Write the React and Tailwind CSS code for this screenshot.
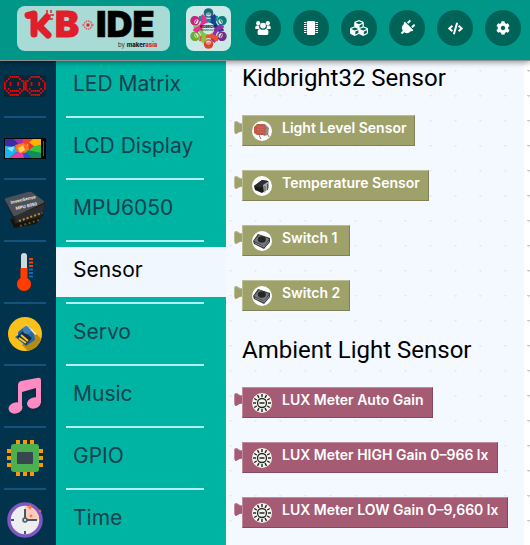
import { FaCubes, FaPlug, FaCode, FaCog } from 'react-icons/fa';

function range(n) {
  return Array.from({ length: n }, (_, i) => i);
}

function ChipIcon() {
  return (
    <svg width="14" height="14" viewBox="0 0 14 14" fill="currentColor" aria-hidden="true">
      <rect x="3" y="0" width="8" height="14" rx="1" />
      {range(6).map((i) => (
        <path key={i} d={`M0 ${1 + i * 2}h2.500v1h-2.500zM11.500 ${1 + i * 2}h2.500v1h-2.500z`} />
      ))}
    </svg>
  );
}

function UsersIcon() {
  return (
    <svg width="16" height="16" viewBox="0 0 16 16" fill="currentColor" aria-hidden="true">
      <circle cx="3.2" cy="3.2" r="2.1" />
      <circle cx="12.8" cy="3.2" r="2.1" />
      <path d="M0.3 9V7.3Q0.3 5.6 2 5.6h2.2Q3.8 8 5 9zM15.7 9V7.3Q15.7 5.6 14 5.6h-2.2Q12.2 8 11 9z" />
      <circle cx="8" cy="5.6" r="2.9" />
      <path d="M2.6 13.6v-2q0-2.5 2.6-2.7q2.8 1.8 5.6 0q2.6.2 2.6 2.7v2q0 1.4-1.4 1.4H4q-1.4 0-1.4-1.4z" />
    </svg>
  );
}

const tools = [
  { label: 'Community', icon: <UsersIcon /> },
  { label: 'Board', icon: <ChipIcon /> },
  { label: 'Packages', icon: <FaCubes size={18} /> },
  { label: 'Port', icon: <FaPlug size={16} className="rotate-45" /> },
  { label: 'Source code', icon: <FaCode size={15} /> },
  { label: 'Settings', icon: <FaCog size={14} /> },
];

const face = [
  '...#####...',
  '..#.....#..',
  '.#.......#.',
  '#..#...#..#',
  '#..#...#..#',
  '#.........#',
  '#.#.....#.#',
  '.#.#####.#.',
  '..#.....#..',
  '...#####...',
];

function MatrixIcon() {
  return (
    <svg width="42" height="22" viewBox="0 0 42 22" aria-hidden="true">
      <rect width="42" height="22" rx="2" fill="#072638" />
      {[0, 21].map((dx) =>
        face.map((row, y) =>
          row.split('').map((c, x) =>
            c === '#' ? <rect key={`${dx}-${x}-${y}`} x={dx + x * 1.9} y={1 + y * 2} width="1.7" height="1.8" fill="#f00808" /> : null
          )
        )
      )}
      <path d="M19 6h4M19 9h4M19 12h4M19 15h4" stroke="#d90909" strokeWidth="1.4" strokeDasharray="1.5 .6" />
    </svg>
  );
}

function DisplayIcon() {
  return (
    <svg width="42" height="21" viewBox="0 0 42 21" aria-hidden="true">
      <rect width="42" height="21" fill="#050505" />
      <rect x="1" y="1" width="36" height="19" fill="#1b79d0" />
      <path d="M1 1h9l8 9L1 8z" fill="#3b2aa0" />
      <path d="M1 8l16 2L5 20H1z" fill="#18b8ec" />
      <path d="M10 1h9l-1 9z" fill="#a92cb8" />
      <path d="M19 1h10L18 11z" fill="#f6402e" />
      <path d="M29 1h8v6l-19 4z" fill="#ffb000" />
      <path d="M37 7v8l-19-4z" fill="#35c43c" />
      <path d="M37 15v5h-9L18 11z" fill="#0e8f56" />
      <path d="M5 20l13-9 3 9z" fill="#e63aa5" />
      <path d="M18 11l10 9h-8z" fill="#2650d8" />
      <path d="M11 7l8-2 8 5-6 5-8-1z" fill="#ff7424" />
      <path d="M14 10l5-3 2 5-5 3z" fill="#ffd34d" />
      <path d="M24 4l6 4-5 4z" fill="#e83030" />
      <path d="M3 10l8-2-3 6z" fill="#8be5fa" />
      <path d="M39.500 3v15" stroke="#777" strokeWidth=".7" />
    </svg>
  );
}

function ImuIcon() {
  return (
    <svg width="42" height="38" viewBox="0 0 42 38" aria-hidden="true">
      <path d="M6 28l4 9 22-4 8-10z" fill="#15130c" />
      <path d="M1 9l7 16 3 8 27-7 3-10V10z" fill="#1e2022" />
      <path d="M1 9Q0 8 2 7L24 1q3-1 5 1l11 8q1 1-1 2L12 25q-2 1-3-1z" fill="#4d5157" />
      <path d="M11 25l30-12-2 10-27 9z" fill="#2b2d30" />
      <path d="M15 30l23-8" stroke="#c58b35" strokeWidth="2" strokeDasharray="2 2" />
      <path d="M16 35l19-6" stroke="#6a4e22" strokeWidth="2" strokeDasharray="2 2.500" />
      <g fill="#f2f2f2" fontFamily="Liberation Sans, sans-serif" fontWeight="700" fontSize="4.600">
        <text transform="translate(7 13) rotate(-13)">InvenSense</text>
        <text transform="translate(12 19) rotate(-13)">MPU 6050</text>
      </g>
    </svg>
  );
}

function ThermometerIcon() {
  return (
    <svg width="42" height="42" viewBox="0 0 42 42" aria-hidden="true">
      <path d="M17 5a3 3 0 0 1 6 0v20h-6z" fill="#cfd8dc" />
      <path d="M16.500 17h7v10a7 7 0 1 1-7 0z" fill="#ff3d00" />
      <path d="M25 8h4M25 11.500h4M25 15h4" stroke="#ff3d00" strokeWidth="2" />
      <path d="M25 18.500h4M25 22h4M25 25.500h4" stroke="#1565c0" strokeWidth="2" />
    </svg>
  );
}

function ServoIcon() {
  return (
    <svg width="34" height="34" viewBox="0 0 34 34" aria-hidden="true">
      <circle cx="17" cy="17" r="17" fill="#fcc01b" />
      <path d="M26 14l7 8a17 17 0 0 1-13 12l-6-6z" fill="#b58b13" />
      <path d="M7 20l3-2v-3l5-4 3-1 8 6 1 7-9 6z" fill="#2568a8" />
      <path d="M9 20l6-6 9 7-6 7z" fill="#172c43" />
      <path d="M13 18l7 6M11 21l7 5" stroke="#ffc51b" strokeWidth="2" />
      <circle cx="19" cy="13" r="4" fill="#3c80b8" />
      <path d="M16 5l13 12-2 1z" fill="#f4e6bd" />
    </svg>
  );
}

function MusicIcon() {
  return (
    <svg width="36" height="38" viewBox="0 0 36 38" className="drop-shadow-md" aria-hidden="true">
      <path d="M11 31V8q0-3 3-4L30 1q4-1 4 2v23h-5V11L15 15v16z" fill="#ff8bc5" />
      <ellipse cx="8.500" cy="31" rx="7" ry="5.500" transform="rotate(-15 8.500 31)" fill="#ff8bc5" />
      <ellipse cx="27" cy="26" rx="7" ry="5.500" transform="rotate(-15 27 26)" fill="#ff8bc5" />
    </svg>
  );
}

function GpioIcon() {
  return (
    <svg width="36" height="36" viewBox="0 0 36 36" aria-hidden="true">
      <path d="M11 0v36M18 0v36M25 0v36M0 11h36M0 18h36M0 25h36" stroke="#ff9800" strokeWidth="4" />
      <rect x="4" y="4" width="28" height="28" rx="3" fill="#4caf50" />
      <rect x="10" y="12" width="16" height="12" rx="1" fill="#37474f" />
    </svg>
  );
}

function ClockIcon() {
  return (
    <svg width="36" height="36" viewBox="0 0 36 36" aria-hidden="true">
      <circle cx="18" cy="18" r="16" fill="#eee" stroke="#7e57c2" strokeWidth="3.500" />
      <path d="M18 18V4a14 14 0 0 1 14 14z" fill="#ffccbc" />
      <path d="M18 7v11h12M18 32v-3M4 18h3" fill="none" stroke="#455a64" strokeWidth="2" />
      <circle cx="18" cy="18" r="2" fill="#cfd8dc" stroke="#455a64" strokeWidth="1.500" />
      <path d="M23 2l1 2 2 1-2 1-1 2-1-2-2-1 2-1zM33 7l.6 1.400L35 9l-1.400.6L33 11l-.6-1.400L31 9l1.400-.6zM24 12l.7 1.300L26 14l-1.300.7L24 16l-.7-1.300L22 14l1.300-.7z" fill="#ff7043" />
    </svg>
  );
}

const categories = [
  { name: 'LED Matrix', Icon: MatrixIcon },
  { name: 'LCD Display', Icon: DisplayIcon },
  { name: 'MPU6050', Icon: ImuIcon },
  { name: 'Sensor', Icon: ThermometerIcon, active: true },
  { name: 'Servo', Icon: ServoIcon },
  { name: 'Music', Icon: MusicIcon },
  { name: 'GPIO', Icon: GpioIcon },
  { name: 'Time', Icon: ClockIcon },
];

function LightArt() {
  return (
    <svg width="20" height="20" viewBox="0 0 20 20" className="shrink-0" aria-hidden="true">
      <circle cx="10" cy="10" r="10" fill="#fff" />
      <path d="M5 4l8-1 4 4-1 7-4 1z" fill="#8f8b89" />
      <path d="M2 6l3-3h7l2 3-1 8H5l-3-2z" fill="#bf5a48" />
      <path d="M5 6h7M5 8.500h7M5 11h7" stroke="#cd7966" strokeWidth=".7" />
      <path d="M7 14l2 4M15 12l2 4" stroke="#887a76" />
    </svg>
  );
}

function TempArt() {
  return (
    <svg width="20" height="20" viewBox="0 0 20 20" className="shrink-0" aria-hidden="true">
      <circle cx="10" cy="10" r="10" fill="#fff" />
      <path d="M2 10l8-6 6 1v8l-6 4-7-3z" fill="#18191a" />
      <path d="M2 10l8-6 6 1-7 7z" fill="#2d2f31" />
      <path d="M11 9l6-4v7l-5 5z" fill="#aaa" />
      <path d="M13 10v5M15.500 8v6" stroke="#555" />
    </svg>
  );
}

function SwitchArt() {
  return (
    <svg width="20" height="20" viewBox="0 0 20 20" className="shrink-0" aria-hidden="true">
      <circle cx="10" cy="10" r="10" fill="#fff" />
      <path d="M1 10l5-7 12 4v4l-6 7-10-5z" fill="#37393b" />
      <path d="M2 10l5-6 10 4-5 7z" fill="#777a7c" />
      <ellipse cx="9.800" cy="8.500" rx="4" ry="3.300" fill="#242628" />
      <path d="M3 12l9 4 5-6" fill="none" stroke="#aaa" strokeWidth=".8" />
    </svg>
  );
}

function LuxArt() {
  return (
    <svg width="20" height="20" viewBox="0 0 20 20" className="shrink-0" aria-hidden="true">
      <circle cx="10" cy="10" r="10" fill="#f5f3ee" />
      <circle cx="10" cy="10" r="4.500" fill="none" stroke="#222" strokeWidth="1.300" />
      <path d="M7.500 10h5" stroke="#222" strokeWidth="1.500" />
      {range(12).map((i) => (
        <path key={i} d="M10 1v3" stroke="#222" strokeWidth="1.400" transform={`rotate(${i * 30} 10 10)`} />
      ))}
    </svg>
  );
}

const tones = {
  olive: { body: 'bg-[#9fa16b] border-t-[#bcbd97] border-l-[#bcbd97] border-r-[#7f8156] border-b-[#7f8156]', tab: '#9fa16b', edge: '#bcbd97' },
  plum: { body: 'bg-[#a55b73] border-t-[#c08c9d] border-l-[#c08c9d] border-r-[#84495c] border-b-[#84495c]', tab: '#a55b73', edge: '#c08c9d' },
};

const groups = [
  {
    title: 'Kidbright32 Sensor',
    tone: 'olive',
    blocks: [
      { text: 'Light Level Sensor', Art: LightArt },
      { text: 'Temperature Sensor', Art: TempArt },
      { text: 'Switch 1', Art: SwitchArt },
      { text: 'Switch 2', Art: SwitchArt },
    ],
  },
  {
    title: 'Ambient Light Sensor',
    tone: 'plum',
    blocks: [
      { text: 'LUX Meter Auto Gain', Art: LuxArt },
      { text: 'LUX Meter HIGH Gain 0–966 lx', Art: LuxArt },
      { text: 'LUX Meter LOW Gain 0–9,660 lx', Art: LuxArt },
    ],
  },
];

function Block({ text, Art, tone }) {
  const t = tones[tone];
  return (
    <li className="flex">
      <svg width="9" height="31" viewBox="0 0 9 31" className="-mr-px shrink-0" aria-hidden="true">
        <path d="M9 8C6 10 4 6 2 6Q.5 6 .5 8V17Q.5 19 2 19C4 19 5 16 9 17z" fill={t.tab} />
        <path d="M8 8.500C6 9.500 4 6.500 2 6.500Q.5 6.500 .5 8V17" fill="none" stroke={t.edge} />
      </svg>
      <div className={`flex h-[31px] min-w-[108px] items-center gap-[10px] whitespace-nowrap border pl-[9px] pr-2 text-sm font-semibold text-white ${t.body}`}>
        <Art />
        <span className="pb-[6px]">{text}</span>
      </div>
    </li>
  );
}

function Logo() {
  return (
    <svg width="153" height="45" viewBox="0 0 153 45" role="img" aria-label="KB IDE by makerasia">
      <g fontFamily="Inter, sans-serif">
        <g fill="none" stroke="#e01f2b" strokeLinejoin="round">
          <path d="M11 9.500l6-1.500v20" strokeWidth="7" strokeLinecap="round" />
          <path d="M30 11L22 20l9 9" strokeWidth="7" strokeLinecap="round" />
          <path d="M30 4v4M34 4v3M37 9h-4M32 13h4" strokeWidth="1.500" />
        </g>
        <text x="38" y="31" fontSize="36" fontWeight="900" fill="#e01f2b" stroke="#e01f2b">B</text>
        <text x="79" y="31" fontSize="36" fontWeight="900" fill="#000" stroke="#000" strokeWidth=".6">IDE</text>
        <circle cx="71" cy="19" r="4" fill="none" stroke="#df5960" strokeWidth="1.500" strokeDasharray="1.500 .8" />
        <rect x="69.500" y="17.500" width="3" height="3" fill="#e01f2b" />
        <path d="M65 19h2M75 19h2" stroke="#df5960" />
        <text x="101" y="41" fontSize="6" fill="#234">
          by <tspan fontWeight="800" fill="#222">maker</tspan>
          <tspan fontWeight="800" fill="#e01f2b">asia</tspan>
        </text>
      </g>
    </svg>
  );
}

const people = ['#168c9a', '#1d3f94', '#9130a0', '#f05030', '#80c843', '#e72f9a'];
const heads = ['#176b78', '#087f7b', '#733084', '#d8472c', '#65ae37', '#c42582'];

function CommunityLogo() {
  return (
    <svg width="45" height="45" viewBox="0 0 45 45" role="img" aria-label="Kidbright community">
      {people.map((color, i) => (
        <g key={color} transform={`rotate(${i * 60} 22.500 22.500)`}>
          <path d="M13 10q3-1 5 2q4.500 2 9 0q2-3 5-2l-1 5q-3 1-4 5h-8l-2-4-4-1z" fill={color} />
          <circle cx="22.500" cy="7" r="4.800" fill={heads[i]} />
          <ellipse cx="22.500" cy="8.500" rx="2.600" ry="2" fill="#e8ddd0" />
          <path d="M20.500 8h4" stroke={heads[i]} />
        </g>
      ))}
      <circle cx="22.500" cy="22.500" r="6" fill="#cdece9" />
      <g fontFamily="Inter, sans-serif" textAnchor="middle" fill="#122">
        <text x="22.500" y="21.500" fontSize="3" fontWeight="900">KIDBRIGHT</text>
        <text x="22.500" y="25" fontSize="2.500">COMMUNITY</text>
      </g>
    </svg>
  );
}

function Dots({ id, color }) {
  return (
    <svg className="absolute inset-0 h-full w-full" aria-hidden="true">
      <defs>
        <pattern id={id} x="3" y="9" width="25" height="25" patternUnits="userSpaceOnUse">
          <path d="M0 .5h3M1.500 0v2" stroke={color} />
        </pattern>
      </defs>
      <rect width="100%" height="100%" fill={`url(#${id})`} />
    </svg>
  );
}

export default function App() {
  return (
    <div className="flex h-screen flex-col overflow-hidden bg-white font-['Inter',sans-serif]">
      <header className="z-10 flex h-[61px] shrink-0 items-center border-b border-[#8f8f8f] bg-[#009688] pb-1 pl-[17px] shadow-[0_2px_5px_rgba(0,0,0,0.35)]">
        <div className="shrink-0 rounded-lg bg-[#a8dbd6]">
          <Logo />
        </div>
        <div className="ml-4 shrink-0 rounded-lg bg-[#cbeae7]">
          <CommunityLogo />
        </div>
        <nav className="ml-[14px] flex gap-3" aria-label="Tools">
          {tools.map((t) => (
            <button key={t.label} type="button" aria-label={t.label} className="flex size-9 shrink-0 items-center justify-center rounded-full bg-[#006358] text-white">
              {t.icon}
            </button>
          ))}
        </nav>
      </header>

      <main className="flex min-h-0 flex-1">
        <nav className="w-[226px] shrink-0 overflow-hidden bg-[linear-gradient(to_right,#01334c_56px,#00b4a4_56px)]" aria-label="Block categories">
          <ul>
            {categories.map(({ name, Icon, active }) => (
              <li key={name} className="mb-[5px]">
                <button type="button" aria-pressed={!!active} className="flex h-[50px] w-full text-left">
                  <span className="flex w-14 shrink-0 items-center self-stretch pl-1">
                    <span className="flex w-[42px] justify-center">
                      <Icon />
                    </span>
                  </span>
                  <span className={`flex flex-1 items-center self-stretch pb-1 pl-[17px] text-[21px] ${active ? 'bg-[#f0f7ff] text-black' : 'text-[#14414f]'}`}>
                    {name}
                  </span>
                </button>
                <div className="mt-[5px] flex h-[2px]">
                  <span className="ml-1 w-[42px] bg-[#14537d]" />
                  <span className="ml-5 w-[138px] bg-[#b3eff5]" />
                </div>
              </li>
            ))}
          </ul>
        </nav>

        <section className="relative min-w-0 flex-1 overflow-hidden bg-[#f4f9ff]">
          <Dots id="flyout-grid" color="#e5ebf6" />
          <div className="relative pl-2 pt-px">
            {groups.map((g) => (
              <div key={g.title} className="mb-[23px]">
                <h2 className="mb-[21px] ml-2 whitespace-nowrap font-['Roboto',sans-serif] text-2xl leading-8 text-black">{g.title}</h2>
                <ul className="flex flex-col gap-6">
                  {g.blocks.map((b) => (
                    <Block key={b.text} {...b} tone={g.tone} />
                  ))}
                </ul>
              </div>
            ))}
          </div>
        </section>
        <div className="relative w-[6px] shrink-0 bg-white">
          <Dots id="workspace-grid" color="#cccccc" />
        </div>
      </main>
    </div>
  );
}
